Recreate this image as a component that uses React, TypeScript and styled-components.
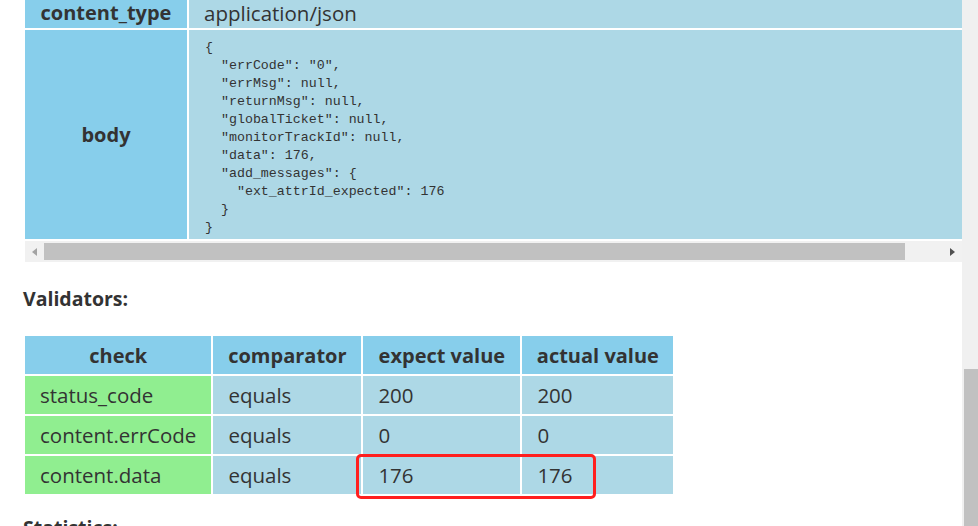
import React from 'react'
import styled, { createGlobalStyle } from 'styled-components'

const GlobalStyle = createGlobalStyle`
  html, body {
    margin: 0;
    padding: 0;
    overflow: hidden;
    background: #fff;
  }
  body {
    font-family: 'Open Sans', 'Liberation Sans', sans-serif;
    color: #333;
  }
`

const Page = styled.div`
  display: flex;
  width: 978px;
  height: 526px;
  overflow: hidden;
`

const Main = styled.div`
  flex: 1;
  min-width: 0;
  padding-left: 23px;
`

// the page is scrolled a little, so the top row is partly out of view
const Viewport = styled.div`
  overflow: hidden;
  margin-top: -5px;
`

const Table = styled.table<{ $width?: number }>`
  border-collapse: separate;
  border-spacing: 2px;
  ${(p) => (p.$width ? `width: ${p.$width}px;` : '')}
  font-size: 20.5px;
`

const KeyCell = styled.th<{ $height: number }>`
  width: 162px;
  height: ${(p) => p.$height}px;
  padding: 0;
  background: #87ceeb;
  font-size: 20px;
  font-weight: 700;
  text-align: center;
  vertical-align: middle;
`

const ValueCell = styled.td`
  padding: 0 0 0 15px;
  background: #add8e6;
  vertical-align: middle;
`

const Json = styled.pre`
  margin: 9px 0 2px 1px;
  font-family: 'Liberation Mono', 'DejaVu Sans Mono', monospace;
  font-size: 13.3px;
  line-height: 18px;
  color: #333;
`

const HScroll = styled.div`
  display: flex;
  align-items: center;
  height: 21px;
  margin-left: 2px;
  background: #f1f1f1;
`

const ArrowBtn = styled.div`
  display: flex;
  align-items: center;
  justify-content: center;
  width: 19px;
  height: 100%;
`

const Arrow = styled.div<{ $dir: 'left' | 'right'; $muted?: boolean }>`
  width: 0;
  height: 0;
  border-top: 4.5px solid transparent;
  border-bottom: 4.5px solid transparent;
  ${(p) =>
    p.$dir === 'left'
      ? `border-right: 5px solid ${p.$muted ? '#a3a3a3' : '#505050'};`
      : `border-left: 5px solid ${p.$muted ? '#a3a3a3' : '#505050'};`}
`

const HThumb = styled.div`
  width: 861px;
  height: 17px;
  background: #c1c1c1;
`

const Spacer = styled.div`
  flex: 1;
`

const Heading = styled.h3<{ $top: number; $bottom: number }>`
  margin: ${(p) => p.$top}px 0 ${(p) => p.$bottom}px;
  font-size: 19.5px;
  font-weight: 700;
  line-height: 26px;
`

const TableWrap = styled.div`
  position: relative;
  display: inline-block;
`

const HeadCell = styled.th<{ $width: number }>`
  width: ${(p) => p.$width}px;
  height: 38px;
  padding: 0 10px;
  box-sizing: border-box;
  background: #87ceeb;
  font-size: 20px;
  font-weight: 700;
  text-align: center;
  white-space: nowrap;
`

const Cell = styled.td<{ $check?: boolean }>`
  height: 38px;
  padding: 0 15px;
  background: ${(p) => (p.$check ? '#90ee90' : '#add8e6')};
  text-align: left;
  white-space: nowrap;
`

const Highlight = styled.div`
  position: absolute;
  left: 333px;
  top: 120px;
  width: 240px;
  height: 45px;
  box-sizing: border-box;
  border: 3px solid #ff1f1f;
  border-radius: 5px;
`

const VScroll = styled.div`
  display: flex;
  flex-direction: column;
  width: 16px;
  height: 526px;
  background: #f0f0f0;
`

const VThumb = styled.div`
  margin-top: auto;
  margin-left: 2px;
  height: 157px;
  background: #c1c1c1;
`

const body = `{
  "errCode": "0",
  "errMsg": null,
  "returnMsg": null,
  "globalTicket": null,
  "monitorTrackId": null,
  "data": 176,
  "add_messages": {
    "ext_attrId_expected": 176
  }
}`

const validators = [
  { check: 'status_code', comparator: 'equals', expect: '200', actual: '200' },
  { check: 'content.errCode', comparator: 'equals', expect: '0', actual: '0' },
  { check: 'content.data', comparator: 'equals', expect: '176', actual: '176' },
]

const App = () => {
  return (
    <Page>
      <GlobalStyle />
      <Main>
        <Viewport>
          <Table $width={1010}>
            <tbody>
              <tr>
                <KeyCell $height={31}>content_type</KeyCell>
                <ValueCell>application/json</ValueCell>
              </tr>
              <tr>
                <KeyCell $height={209}>body</KeyCell>
                <ValueCell>
                  <Json>{body}</Json>
                </ValueCell>
              </tr>
            </tbody>
          </Table>
        </Viewport>
        <HScroll>
          <ArrowBtn>
            <Arrow $dir="left" $muted />
          </ArrowBtn>
          <HThumb />
          <Spacer />
          <ArrowBtn>
            <Arrow $dir="right" />
          </ArrowBtn>
        </HScroll>

        <Heading $top={24} $bottom={22}>Validators:</Heading>
        <TableWrap>
          <Table>
            <thead>
              <tr>
                <HeadCell $width={186}>check</HeadCell>
                <HeadCell $width={148}>comparator</HeadCell>
                <HeadCell $width={157}>expect value</HeadCell>
                <HeadCell $width={151}>actual value</HeadCell>
              </tr>
            </thead>
            <tbody>
              {validators.map((v) => (
                <tr key={v.check}>
                  <Cell $check>{v.check}</Cell>
                  <Cell>{v.comparator}</Cell>
                  <Cell>{v.expect}</Cell>
                  <Cell>{v.actual}</Cell>
                </tr>
              ))}
            </tbody>
          </Table>
          <Highlight />
        </TableWrap>
        <Heading $top={14} $bottom={0}>Statistics:</Heading>
      </Main>
      <VScroll>
        <VThumb />
      </VScroll>
    </Page>
  )
}

export default App
